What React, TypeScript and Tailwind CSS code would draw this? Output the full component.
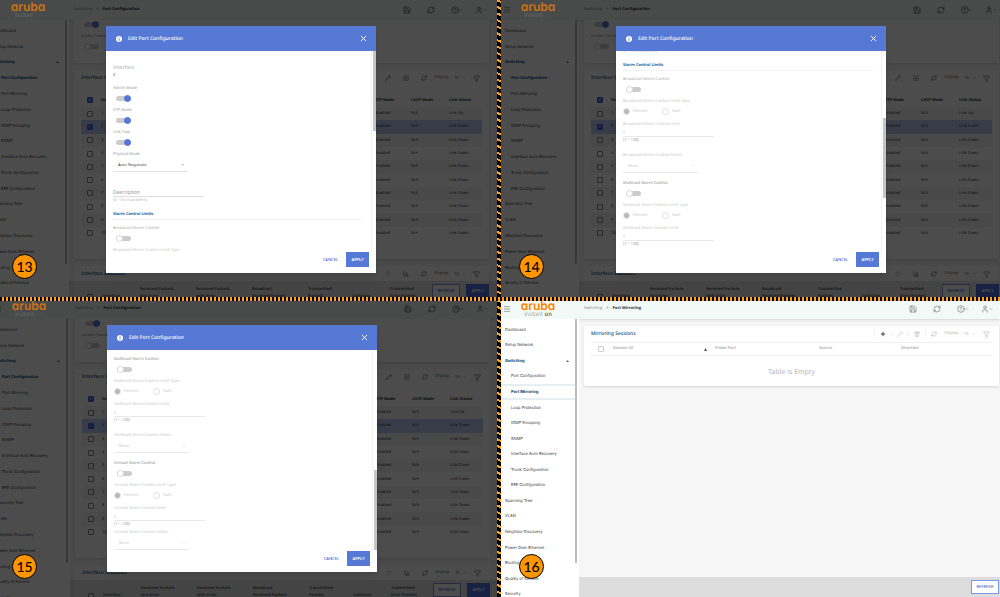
import { ReactNode, useId, useLayoutEffect, useRef } from 'react';
import {
  ChevronDown, CircleHelp, Filter, Menu, Pencil, Plus, RefreshCw, Save, SquarePen, Trash2, User, ChartColumn, X,
} from 'lucide-react';
import clsx from 'clsx';

const topItems = ['Dashboard', 'Setup Network'];
const switchingItems = [
  'Port Configuration', 'Port Mirroring', 'Loop Protection', 'IGMP Snooping', 'SNMP',
  'Interface Auto Recovery', 'Trunk Configuration', 'EEE Configuration',
];
const bottomItems = [
  'Spanning Tree', 'VLAN', 'Neighbor Discovery', 'Power Over Ethernet', 'Routing', 'Quality of Service', 'Security',
];
const ports = [1, 2, 3, 4, 5, 6, 7, 8, 9, 10];
const statColumns = [
  ['Received Packets', 'w/o Error'],
  ['Received Packets', 'with Error'],
  ['Broadcast', 'Received Packets'],
  ['Transmitted', 'Packets'],
  ['', 'Collisions'],
  ['Transmitted', 'Error Packets'],
];

function CheckBox({ label, checked = false }: { label: string; checked?: boolean }) {
  return (
    <input
      type="checkbox"
      aria-label={label}
      defaultChecked={checked}
      className="mx-auto flex size-[6px] appearance-none items-center justify-center rounded-[1px] border border-[#888888] text-[4px] leading-none text-white checked:border-[#3f63e8] checked:bg-[#3f63e8] checked:before:content-['✓']"
    />
  );
}

function Toggle({ id, on = false, label }: { id?: string; on?: boolean; label?: string }) {
  return (
    <input
      id={id}
      aria-label={label}
      type="checkbox"
      role="switch"
      defaultChecked={on}
      className="flex h-[5px] w-[15px] appearance-none items-center rounded-full bg-[#cccccc] before:size-[7px] before:shrink-0 before:rounded-full before:border before:border-[#d8d8d8] before:bg-white before:content-[''] checked:justify-end checked:before:border-[#5378d8] checked:before:bg-[#5378d8]"
    />
  );
}

function Logo() {
  return (
    <a href="#home" className="flex w-[36px] flex-col items-center whitespace-nowrap">
      <span className="font-['Inter',sans-serif] text-[12px] leading-[10px] font-semibold text-[#ff8300] [font-feature-settings:'cv11']">aruba</span>
      <span className="font-['Inter',sans-serif] text-[6px] leading-[7px] font-light text-[#888888] [font-feature-settings:'cv11']">
        instant <span className="font-medium text-[#555555]">on</span>
      </span>
    </a>
  );
}

function Header({ title, dimmed }: { title: string; dimmed: boolean }) {
  return (
    <header className={clsx('flex h-[20px] shrink-0 items-center bg-[#f1faf7] pl-[2px] shadow-sm', dimmed ? 'pr-[10px]' : 'pr-[7px]')}>
      <button aria-label="Menu" className="text-[#777777]"><Menu className="size-[8px]" strokeWidth={2} /></button>
      <div className={clsx('ml-[9px]', dimmed && 'relative z-20 opacity-70')}>
        <Logo />
      </div>
      <nav aria-label="Breadcrumb" className="ml-[28px] flex flex-1 items-center gap-[4px] whitespace-nowrap">
        <a href="#switching" className="text-[#888888]">Switching</a>
        <span className="text-[#555555]">&gt;</span>
        <span className="font-bold text-[#333333]">{title}</span>
      </nav>
      <div className={clsx('flex items-center', dimmed ? 'text-[#555555]' : 'text-[#777777]')}>
        <button aria-label="Save" className="mr-[16px]"><Save className="size-[8px]" strokeWidth={2} /></button>
        <button aria-label="Reload" className="mr-[16px]"><RefreshCw className="size-[8px]" strokeWidth={2} /></button>
        <button aria-label="Help" className="mr-[12px] flex items-center">
          <CircleHelp className="size-[8px]" strokeWidth={2} /><ChevronDown className="size-[4px]" strokeWidth={3} />
        </button>
        <button aria-label="Account" className="flex items-center">
          <User className="size-[8px]" strokeWidth={2} /><ChevronDown className="size-[4px]" strokeWidth={3} />
        </button>
      </div>
    </header>
  );
}

function Sidebar({ active, dimmed }: { active: string; dimmed: boolean }) {
  return (
    <aside className="flex w-[78px] shrink-0 bg-white font-['Inter','Liberation_Sans',sans-serif] text-[4px] leading-[6px] text-[#333333]">
      <nav className={clsx('mt-[3px] grid w-[74px] auto-rows-fr', dimmed ? 'h-[284px]' : 'h-[280px]')}>
        {topItems.map(item => (
          <a key={item} href="#nav" className="flex items-center pl-[4px]">{item}</a>
        ))}
        <a href="#switching" className="flex items-center justify-between pr-[6px] pl-[4px] font-bold text-[#01497c]">
          Switching
          <svg viewBox="0 0 4 2" className="h-[2px] w-[3px] fill-current"><path d="M2 0l2 2H0z" /></svg>
        </a>
        {switchingItems.map(item => (
          <a
            key={item}
            href="#nav"
            className={clsx(
              'flex items-center pl-[10px]',
              item === active && 'font-bold text-[#01497c]',
              item === active && !dimmed && 'border-y-2 border-[#e6eef1]',
            )}
          >
            {item}
          </a>
        ))}
        {bottomItems.map(item => (
          <a key={item} href="#nav" className="flex items-center pl-[4px]">{item}</a>
        ))}
      </nav>
      <div className="h-[244px] w-[2px] bg-[#bbbbbb]" />
    </aside>
  );
}

function Toolbar({ children, tight = false }: { children: ReactNode; tight?: boolean }) {
  const id = useId();
  return (
    <div
      className={clsx(
        'flex items-center',
        tight
          ? 'gap-[5px] text-[#b0b0b0] [&>button]:border-l [&>button]:border-[#eeeeee] [&>button]:pl-[5px]'
          : 'gap-[12px] text-[#555555]',
      )}
    >
      {children}
      <button aria-label="Refresh table"><RefreshCw className="size-[6px]" strokeWidth={2} /></button>
      <div className={clsx('flex items-center', tight ? 'ml-[2px]' : '-ml-[5px]')}>
        <label htmlFor={id}>Display:</label>
        <select id={id} className="ml-[5px] w-[8px] appearance-none">
          <option>10</option>
        </select>
        <ChevronDown className="size-[4px]" />
        <button aria-label="Filter" className="ml-[7px]"><Filter className="size-[7px]" strokeWidth={2} /></button>
      </div>
    </div>
  );
}

function CardTitle({ title, children }: { title: string; children: ReactNode }) {
  return (
    <div className="flex h-[16px] items-center justify-between pr-[2px]">
      <h2 className="text-[5px] font-medium text-[#01497c]">{title}</h2>
      {children}
    </div>
  );
}

function PortTables() {
  return (
    <main className="flex flex-1 flex-col overflow-hidden pr-[8px] pl-[5px]">
      <section className="h-[43px] shrink-0 bg-white px-[7px] shadow-sm">
        <div className="flex h-[9px] items-center pl-[3px]"><Toggle label="Flow Control" on /></div>
        <label className="mt-[5px] block text-[#888888]" htmlFor="jumbo">Jumbo Frames</label>
        <div className="mt-[4px] pl-[3px]"><Toggle label="Jumbo Frames" /></div>
      </section>

      <section className="mt-[7px] h-[189px] shrink-0 bg-white px-[7px] shadow-sm">
        <CardTitle title="Interface Configuration">
          <Toolbar>
            <button aria-label="Edit"><Pencil className="size-[6px]" /></button>
            <button aria-label="Edit all"><SquarePen className="size-[6px]" /></button>
          </Toolbar>
        </CardTitle>
        <table className="mt-[7px] h-[147px] w-full table-fixed border-collapse text-left leading-[7px] text-[#333333]">
          <colgroup>
            <col className="w-[17px]" /><col /><col className="w-[36px]" /><col className="w-[38px]" /><col className="w-[33px]" />
          </colgroup>
          <thead>
            <tr className="h-[14px]">
              <th><CheckBox label="Select all" checked /></th>
              <th className="pl-[3px]">Interface</th>
              <th>STP Mode</th>
              <th>LACP Mode</th>
              <th>Link Status</th>
            </tr>
          </thead>
          <tbody>
            {ports.map(port => (
              <tr key={port} className={port === 2 ? 'bg-[#b9caf2]' : port % 2 ? 'bg-[#f4f4f4]' : ''}>
                <td><CheckBox label={`Select ${port}`} checked={port === 2} /></td>
                <td className="pl-[3px]">{port}</td>
                <td>Enabled</td>
                <td>N/A</td>
                <td>{port === 1 ? 'Link Up' : 'Link Down'}</td>
              </tr>
            ))}
          </tbody>
        </table>
      </section>

      <section className="mt-[7px] flex-1 bg-white px-[7px]">
        <CardTitle title="Interface Statistics">
          <Toolbar>
            <button aria-label="Clear" disabled className="opacity-30"><Trash2 className="size-[6px]" /></button>
            <button aria-label="Chart"><ChartColumn className="size-[6px]" /></button>
          </Toolbar>
        </CardTitle>
        <table className="mt-[4px] w-full table-fixed text-left leading-[7px] text-[#555555]">
          <colgroup>
            <col className="w-[17px]" /><col className="w-[42px]" />
            <col className="w-[56px]" /><col className="w-[56px]" /><col className="w-[56px]" /><col className="w-[44px]" /><col className="w-[38px]" /><col />
          </colgroup>
          <thead>
            <tr className="align-bottom">
              <th><CheckBox label="Select all statistics" /></th>
              <th className="pl-[4px] font-semibold">Interface</th>
              {statColumns.map(([first, second]) => (
                <th key={first + second} className="font-semibold whitespace-nowrap">{first}<br />{second}</th>
              ))}
            </tr>
          </thead>
        </table>
      </section>
    </main>
  );
}

function MirrorTable() {
  return (
    <main className="flex-1 pt-[7px] pr-[1px] pl-[5px]">
      <section className="bg-white px-[7px] shadow-sm">
        <CardTitle title="Mirroring Sessions">
          <Toolbar tight>
            <button aria-label="Add" className="text-[#444444]"><Plus className="size-[6px]" strokeWidth={4} /></button>
            <button aria-label="Edit" disabled className="opacity-60"><Pencil className="size-[6px]" /></button>
            <button aria-label="Delete" disabled><Trash2 className="size-[6px]" /></button>
          </Toolbar>
        </CardTitle>
        <table className="w-full table-fixed border-collapse text-left text-[#aaaaaa]">
          <colgroup>
            <col className="w-[19px]" /><col className="w-[105px]" /><col className="w-[104px]" /><col className="w-[82px]" /><col />
          </colgroup>
          <thead>
            <tr className="h-[13px] border-y border-[#f0f0f0]">
              <th><div className="opacity-40"><CheckBox label="Select all sessions" /></div></th>
              <th className="pl-[3px] font-semibold">
                <div className="flex items-center justify-between pr-[8px]">
                  Session ID
                  <svg viewBox="0 0 4 4" className="size-[3px] fill-[#555555]"><path d="M2 0l2 4H0z" /></svg>
                </div>
              </th>
              <th className="font-semibold">Probe Port</th>
              <th className="font-semibold">Source</th>
              <th className="font-semibold">Direction</th>
            </tr>
          </thead>
          <tbody>
            <tr className="h-[30px]">
              <td colSpan={5} className="pt-[4px] text-center text-[7px] leading-[8px] text-[#b5b5b5]">Table is Empty</td>
            </tr>
          </tbody>
        </table>
      </section>
    </main>
  );
}

function Footer({ apply = false }: { apply?: boolean }) {
  return (
    <footer className={clsx('absolute right-0 bottom-0 left-[78px] flex h-[20px] items-center justify-end gap-[6px] bg-black/10', apply ? 'pr-[8px]' : 'pr-[1px]')}>
      <button className="h-[14px] w-[28px] border border-[#7d97e0] bg-white font-medium text-[#4469cf]">REFRESH</button>
      {apply && <button className="h-[14px] w-[23px] bg-[#4a6fe0] font-semibold text-white">APPLY</button>}
    </footer>
  );
}

function SwitchField({ label, on = false, className = 'text-[#999999]' }: { label: string; on?: boolean; className?: string }) {
  const id = useId();
  return (
    <div className="mb-[3px]">
      <label htmlFor={id} className={clsx('block', className)}>{label}</label>
      <div className="flex h-[13px] items-center pl-[3px]"><Toggle id={id} on={on} /></div>
    </div>
  );
}

function SelectField({ label, value, disabled = false }: { label: string; value: string; disabled?: boolean }) {
  const id = useId();
  return (
    <div className={disabled ? 'text-[#c8c8c8]' : 'text-[#444444]'}>
      <label htmlFor={id} className={clsx('block', !disabled && 'text-[#999999]')}>{label}</label>
      <div className={clsx('flex h-[14px] w-[75px] items-center border-b pr-[4px] pl-[5px]', disabled ? 'border-[#e8e8e8]' : 'border-[#e2e2e2]')}>
        <select id={id} disabled={disabled} className="flex-1 appearance-none opacity-100">
          <option>{value}</option>
        </select>
        <svg viewBox="0 0 4 3" className={clsx('h-[2px] w-[2px]', disabled ? 'fill-[#dddddd]' : 'fill-[#999999]')}><path d="M0 0h4L2 3z" /></svg>
      </div>
    </div>
  );
}

function RadioOption({ name, label, checked = false }: { name: string; label: string; checked?: boolean }) {
  return (
    <label className="flex w-[39px] items-center gap-[3px]">
      <input
        type="radio"
        name={name}
        defaultChecked={checked}
        disabled
        className="flex size-[7px] appearance-none items-center justify-center rounded-full border border-[#dddddd] before:size-[5px] before:rounded-full before:content-[''] checked:before:bg-[#b8b8b8]"
      />
      {label}
    </label>
  );
}

function StormControl({ kind, last = false }: { kind: string; last?: boolean }) {
  const id = useId();
  return (
    <div className="mb-[8px] text-[#c8c8c8]">
      <SwitchField label={`${kind} Storm Control`} className={kind === 'Broadcast' ? 'text-[#aaaaaa]' : 'text-[#888888]'} />
      <fieldset className="mb-[4px]">
        <legend>{kind} Storm Control Limit Type</legend>
        <div className="flex h-[13px] items-center">
          <RadioOption name={id + 'type'} label="Percent" checked />
          <RadioOption name={id + 'type'} label="Rate" />
        </div>
      </fieldset>
      <label htmlFor={id} className="block">{kind} Storm Control Limit</label>
      <input id={id} disabled defaultValue="5" className="block h-[9px] w-[91px] border-b border-[#e8e8e8]" />
      <p className={clsx('mt-px text-[#999999]', last ? 'mb-[2px]' : 'mb-[9px]')}>(1 ~ 100)</p>
      <SelectField label={`${kind} Storm Control Action`} value="None" disabled />
    </div>
  );
}

interface PortDialogProps {
  scroll: number;
  thumb: string;
}

function PortDialog({ scroll, thumb }: PortDialogProps) {
  const bodyRef = useRef<HTMLDivElement>(null);

  useLayoutEffect(() => {
    if (bodyRef.current) bodyRef.current.scrollTop = scroll;
  }, [scroll]);

  return (
    <div role="dialog" aria-label="Edit Port Configuration" className="absolute top-[26px] right-[121px] bottom-[28px] left-[115px] z-30 flex flex-col bg-white shadow-md">
      <div className="flex h-[25px] shrink-0 items-center bg-[#5679d6] pr-[8px] pl-[10px] text-white">
        <svg viewBox="0 0 12 12" className="size-[6px]">
          <circle cx="6" cy="6" r="6" fill="white" />
          <path d="M6 2.4v1.6M6 5.2v4.4" stroke="#5679d6" strokeWidth="2" />
        </svg>
        <h1 className="ml-[6px] flex-1 text-[5px] font-medium">Edit Port Configuration</h1>
        <button aria-label="Close"><X className="size-[9px]" strokeWidth={2.5} /></button>
      </div>
      <div className="flex min-h-0 flex-1">
        <div ref={bodyRef} className="flex-1 overflow-hidden px-[7px] pt-[14px]">
          <p className="text-[5px] text-[#aaaaaa]">Interface</p>
          <p className="mt-[2px] mb-[7px] text-[#444444]">2</p>
          <SwitchField label="Admin Mode" on />
          <SwitchField label="STP Mode" on />
          <SwitchField label="Link Trap" on />
          <div className="mt-[3px] mb-[15px]">
            <SelectField label="Physical Mode" value="Auto Negotiate" />
          </div>
          <input aria-label="Description" placeholder="Description" className="block h-[10px] w-[91px] border-b border-[#dddddd] text-[5px] placeholder:text-[#999999]" />
          <p className="mt-px text-[#bbbbbb]">(0 ~ 64 characters)</p>
          <h3 className="mt-[8px] mb-[6px] h-[8px] border-b border-[#f4f4f4] font-semibold text-[#01497c]">Storm Control Limits</h3>
          <StormControl kind="Broadcast" />
          <StormControl kind="Multicast" />
          <StormControl kind="Unicast" last />
        </div>
        <div className="w-[5px] border-l border-[#f2f2f2] pl-px">
          <div className={clsx('h-[80px] w-[3px] bg-[#c4c4c4]', thumb)} />
        </div>
      </div>
      <div className="flex h-[21px] shrink-0 items-start justify-end gap-[8px] pr-[7px] font-semibold">
        <button className="h-[15px] font-medium text-[#4469cf]">CANCEL</button>
        <button className="h-[15px] w-[23px] bg-[#5679d6] text-white">APPLY</button>
      </div>
    </div>
  );
}

interface PanelProps {
  step: number;
  title: string;
  // how far the page bleeds out of its tile
  bleed: string;
  badge: string;
  dialog?: PortDialogProps;
}

function Panel({ step, title, bleed, badge, dialog }: PanelProps) {
  const dimmed = !!dialog;
  return (
    <section className="relative flex min-h-0 min-w-0 overflow-hidden">
      <div className={clsx('relative flex min-w-0 flex-1 flex-col bg-[#f6f6f6]', bleed)}>
        <Header title={title} dimmed={dimmed} />
        <div className="flex min-h-0 flex-1 overflow-hidden">
          <Sidebar active={title} dimmed={dimmed} />
          {dialog ? <PortTables /> : <MirrorTable />}
        </div>
        <Footer apply={dimmed} />
        {dialog && (
          <>
            <div className="absolute inset-0 z-10 bg-black/70" />
            <PortDialog {...dialog} />
          </>
        )}
      </div>
      <span className={clsx("absolute bottom-[18px] z-40 flex size-[25px] items-center justify-center rounded-full border border-black bg-[#ff9500] font-['Lato',sans-serif] text-[14px] font-medium text-black", badge)}>
        {step}
      </span>
    </section>
  );
}

export default function App() {
  return (
    <div className="grid h-screen grid-cols-[497fr_4px_499fr] grid-rows-[297fr_4px_296fr] overflow-hidden bg-black font-['Noto_Sans','Open_Sans',sans-serif] text-[4px] leading-[6px] [text-rendering:geometricPrecision]">
      <Panel step={13} title="Port Configuration" bleed="-ml-[9px] -mb-[4px]" badge="left-[12px]" dialog={{ scroll: 0, thumb: 'mt-0' }} />
      <div className="bg-[repeating-linear-gradient(25deg,#000_0_4px,#ffa02a_4px_6px)]" />
      <Panel step={14} title="Port Configuration" bleed="-mr-[7px] -mb-[4px]" badge="left-[18px]" dialog={{ scroll: 149, thumb: 'mt-[67px]' }} />
      <div className="col-span-3 bg-[repeating-linear-gradient(90deg,#000_0_2px,#ffa02a_2px_4px)]" />
      <Panel step={15} title="Port Configuration" bleed="-ml-[8px] -mt-[2px] -mb-[3px] -mr-px" badge="left-[12px]" dialog={{ scroll: 272, thumb: 'mt-[120px]' }} />
      <div className="bg-[repeating-linear-gradient(25deg,#000_0_4px,#ffa02a_4px_6px)]" />
      <Panel step={16} title="Port Mirroring" bleed="-mt-[2px]" badge="left-[18px]" />
    </div>
  );
}
